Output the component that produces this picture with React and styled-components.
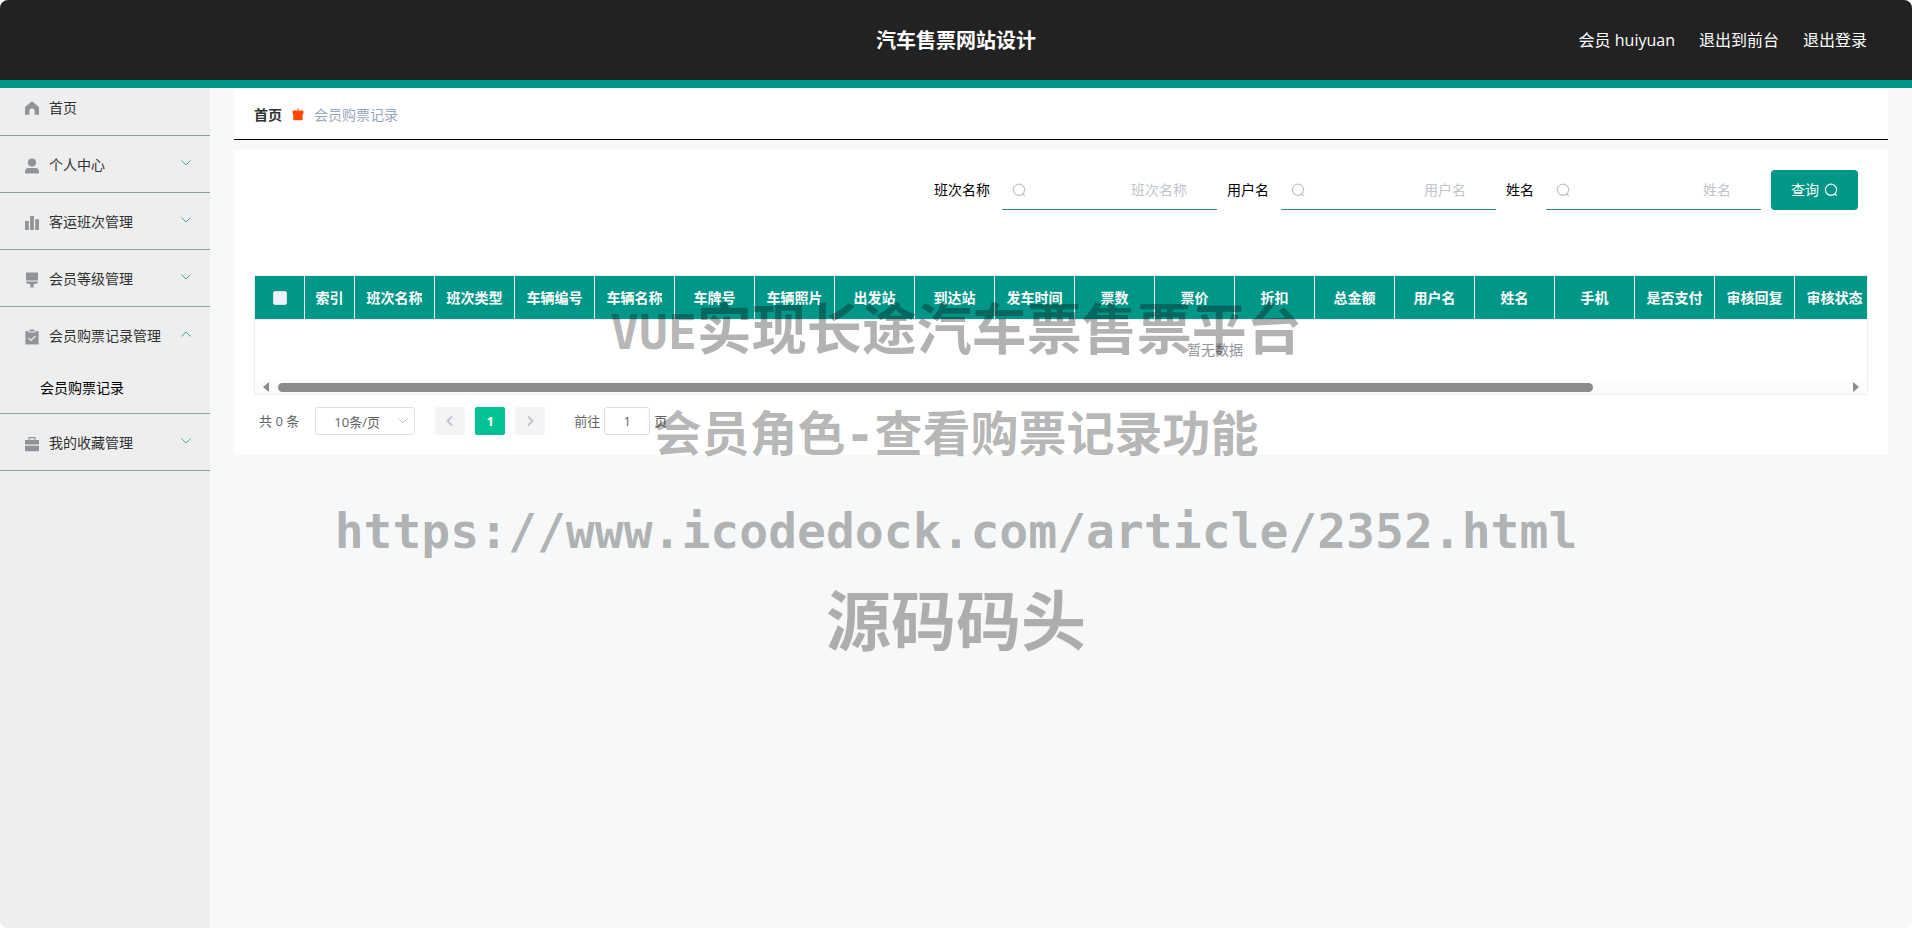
import React from "react";
import styled, { createGlobalStyle } from "styled-components";

const GlobalStyle = createGlobalStyle`
  * {
    box-sizing: border-box;
  }

  body {
    margin: 0;
    background: #fff;
    font-family: "Open Sans", "Noto Sans CJK SC", sans-serif;
    font-size: 14px;
    line-height: 20px;
    color: #303133;
  }

  button, input, select {
    font: inherit;
    color: inherit;
    margin: 0;
    padding: 0;
    border: 0;
    background: none;
    outline: none;
  }

  a {
    color: inherit;
    text-decoration: none;
  }
`;

const menu = [
  { label: "首页", icon: "home" },
  { label: "个人中心", icon: "user", sub: [] },
  { label: "客运班次管理", icon: "data", sub: [] },
  { label: "会员等级管理", icon: "brush", sub: [] },
  {
    label: "会员购票记录管理",
    icon: "claim",
    open: true,
    sub: ["会员购票记录"],
  },
  { label: "我的收藏管理", icon: "suitcase", sub: [] },
];

const filters = ["班次名称", "用户名", "姓名"];

const columns = [
  "班次名称",
  "班次类型",
  "车辆编号",
  "车辆名称",
  "车牌号",
  "车辆照片",
  "出发站",
  "到达站",
  "发车时间",
  "票数",
  "票价",
  "折扣",
  "总金额",
  "用户名",
  "姓名",
  "手机",
  "是否支付",
  "审核回复",
  "审核状态",
];

const shapes = {
  home: (
    <path d="M8 1.200 15 7v7.800h-4.400V11a2.600 2.600 0 0 0-5.200 0v3.800H1V7z" />
  ),
  user: (
    <>
      <circle cx="8" cy="4.600" r="4.100" />
      <path d="M4.500 10h7A3.500 3.500 0 0 1 15 13.500v.9a1 1 0 0 1-1 1H2a1 1 0 0 1-1-1v-.9A3.500 3.500 0 0 1 4.500 10z" />
    </>
  ),
  data: <path d="M1 6h3.800v9H1zM6.100 1h3.800v14H6.100zM11.200 4.200H15V15h-3.800z" />,
  brush: (
    <path d="M2.500.5h11a.5.5 0 0 1 .5.5v7.500H2V1a.5.5 0 0 1 .5-.5zM2 9.500h12v1l-2 1.500H9.700v3.500H6.300V12H4l-2-1.500z" />
  ),
  claim: (
    <>
      <path d="M2 2h2.500v1.500h7V2H14a.6.6 0 0 1 .6.6v12.300a.6.6 0 0 1-.6.6H2a.6.6 0 0 1-.6-.6V2.600A.6.6 0 0 1 2 2z" />
      <path d="M5.500.5h5v2h-5z" />
      <path d="m4.500 9 2.500 2.500 4.500-4.500" fill="none" stroke="#eee" strokeWidth="1.200" />
    </>
  ),
  suitcase: (
    <path d="M4.500 1h7v3H15v4.500H1V4h3.500zm1.200 1.200V4h4.600V2.200zM1 9.700h14v5a.5.5 0 0 1-.5.5h-13a.5.5 0 0 1-.5-.5z" />
  ),
};

const MenuIcon = ({ name }) => (
  <svg width="16" height="16" viewBox="0 0 16 16" fill="#909399" fillRule="evenodd">
    {shapes[name]}
  </svg>
);

const Chevron = ({ d, color, width = 1 }) => (
  <svg width="12" height="12" viewBox="0 0 12 12" fill="none" stroke={color} strokeWidth={width}>
    <path d={d} />
  </svg>
);

const down = "M1.500 3.500 6 8l4.500-4.500";
const up = "M1.500 8.500 6 4l4.500 4.500";
const left = "M8 1.500 3.500 6 8 10.500";
const right = "M4 1.500 8.500 6 4 10.500";

const SearchIcon = ({ color = "#c0c4cc" }) => (
  <svg width="14" height="14" viewBox="0 0 14 14" fill="none" stroke={color} strokeWidth="1.200">
    <circle cx="7" cy="6.800" r="5.600" />
    <path d="m10.800 10.800 2 2" />
  </svg>
);

const Basket = () => (
  <svg width="12" height="14" viewBox="0 0 12 14" fill="#ff4500">
    <path d="M1.200 2.500h2.600l1.500.5V.5h1.200V3l1.500-.5h2.800l.6.6v3.200h-.8v5.200a.8.8 0 0 1-.8.8H2.100a.8.8 0 0 1-.8-.8V6.300H.6V3.100z" />
  </svg>
);

const App = () => (
  <>
    <GlobalStyle />
    <Page>
      <Header>
        <Title>汽车售票网站设计</Title>
        <UserNav>
          <span>会员 huiyuan</span>
          <a href="#front">退出到前台</a>
          <a href="#logout">退出登录</a>
        </UserNav>
      </Header>
      <Body>
        <Sidebar>
          {menu.map((item) => (
            <MenuGroup key={item.label}>
              <MenuRow $first={!item.sub} type="button">
                <MenuIcon name={item.icon} />
                <MenuLabel>{item.label}</MenuLabel>
                {item.sub && (
                  <Arrow>
                    <Chevron d={item.open ? up : down} color="#3fa79b" />
                  </Arrow>
                )}
              </MenuRow>
              {item.open &&
                item.sub.map((s) => (
                  <SubItem key={s} href="#records">
                    {s}
                  </SubItem>
                ))}
            </MenuGroup>
          ))}
        </Sidebar>
        <Main>
          <Breadcrumb>
            <b>首页</b>
            <Basket />
            <Current>会员购票记录</Current>
          </Breadcrumb>
          <Card>
            <SearchForm onSubmit={(e) => e.preventDefault()}>
              {filters.map((f, i) => (
                <Field key={f}>
                  <label htmlFor={`filter-${i}`}>{f}</label>
                  <InputBox>
                    <SearchIcon />
                    <Input id={`filter-${i}`} placeholder={f} />
                  </InputBox>
                </Field>
              ))}
              <QueryButton type="submit">
                查询
                <SearchIcon color="#fff" />
              </QueryButton>
            </SearchForm>
            <TableBox>
              <TableView>
                <Table>
                  <colgroup>
                    <Col $w={50} />
                    <Col $w={50} />
                    {columns.map((c) => (
                      <Col key={c} $w={80} />
                    ))}
                    <Col $w={300} />
                  </colgroup>
                  <thead>
                    <tr>
                      <Th>
                        <Checkbox type="checkbox" aria-label="全选" />
                      </Th>
                      <Th>索引</Th>
                      {columns.map((c) => (
                        <Th key={c}>{c}</Th>
                      ))}
                      <Th />
                    </tr>
                  </thead>
                  <tbody>
                    <tr>
                      <Empty colSpan={columns.length + 3}>暂无数据</Empty>
                    </tr>
                  </tbody>
                </Table>
              </TableView>
              <ScrollBar>
                <svg width="6" height="10" viewBox="0 0 6 10" fill="#8b8b8b">
                  <path d="M6 0v10L0 5z" />
                </svg>
                <Track>
                  <Thumb />
                </Track>
                <svg width="6" height="10" viewBox="0 0 6 10" fill="#8b8b8b">
                  <path d="M0 0v10l6-5z" />
                </svg>
              </ScrollBar>
            </TableBox>
            <Pagination>
              <span>共 0 条</span>
              <SelectBox>
                <Select aria-label="每页条数" defaultValue="10">
                  <option value="10">10条/页</option>
                </Select>
                <SelectArrow>
                  <Chevron d={down} color="#c0c4cc" />
                </SelectArrow>
              </SelectBox>
              <Pager>
                <PageButton type="button" aria-label="上一页">
                  <Chevron d={left} color="#c0c4cc" width={2} />
                </PageButton>
                <PageButton type="button" $active>
                  1
                </PageButton>
                <PageButton type="button" aria-label="下一页">
                  <Chevron d={right} color="#c0c4cc" width={2} />
                </PageButton>
              </Pager>
              <Jump>
                <label htmlFor="jump">前往</label>
                <JumpInput id="jump" defaultValue="1" />
                <span>页</span>
              </Jump>
            </Pagination>
          </Card>
        </Main>
      </Body>
      <Watermark>
        <Mark $size={55} $line={100}>
          <Latin>VUE</Latin>实现长途汽车票售票平台
        </Mark>
        <Mark $size={48} $line={104}>
          会员角色-查看购票记录功能
        </Mark>
        <Mark $size={48} $line={90}>
          https://www.icodedock.com/article/2352.html
        </Mark>
        <Mark $size={65} $line={94}>
          源码码头
        </Mark>
      </Watermark>
    </Page>
  </>
);

const Page = styled.div`
  position: relative;
  display: flex;
  flex-direction: column;
  min-height: 100vh;
  overflow: hidden;
  border-radius: 8px;
  background: #f6f8fa;
`;

const Header = styled.header`
  display: grid;
  grid-template-columns: 1fr auto 1fr;
  align-items: center;
  height: 88px;
  padding: 0 45px;
  background: #222;
  border-bottom: 8px solid #009688;
  color: #fff;
`;

const Title = styled.h1`
  grid-column: 2;
  margin: 0;
  padding-top: 2px;
  font-size: 20px;
  line-height: 28px;
`;

const UserNav = styled.nav`
  display: flex;
  justify-content: flex-end;
  gap: 24px;
  font-size: 16px;
`;

const Body = styled.div`
  display: flex;
  flex: 1;
`;

const Sidebar = styled.nav`
  flex: none;
  width: 210px;
  background: #eee;
`;

const MenuGroup = styled.div`
  border-bottom: 1px solid #85a69c;
`;

const MenuRow = styled.button`
  display: flex;
  align-items: center;
  gap: 9px;
  width: 100%;
  height: ${(p) => (p.$first ? 47 : 56)}px;
  padding: ${(p) => (p.$first ? "0 18px 8px 24px" : "2px 18px 0 24px")};
  cursor: pointer;

  svg {
    margin-top: 1px;
  }
`;

const MenuLabel = styled.span`
  flex: 1;
  text-align: left;
`;

const Arrow = styled.span`
  display: flex;
  padding-bottom: 6px;
`;

const SubItem = styled.a`
  display: block;
  padding-left: 40px;
  line-height: 50px;
  color: #000;
`;

const Main = styled.main`
  flex: 1;
  min-width: 0;
  padding: 2px 24px;
`;

const Breadcrumb = styled.div`
  display: flex;
  align-items: center;
  gap: 10px;
  height: 50px;
  padding: 0 20px;
  margin-bottom: 10px;
  background: #fff;
  border-bottom: 1px solid #000;
`;

const Current = styled.span`
  color: #97a8be;
`;

const Card = styled.section`
  padding: 20px;
  background: #fff;
`;

const SearchForm = styled.form`
  display: flex;
  justify-content: flex-end;
  gap: 10px;
  padding: 0 10px;
  margin-bottom: 65px;
  color: #000;
`;

const Field = styled.div`
  display: flex;
  align-items: center;
  gap: 12px;
`;

const InputBox = styled.div`
  display: flex;
  align-items: center;
  width: 215px;
  height: 40px;
  padding: 0 30px 0 10px;
  border-bottom: 1px solid #2a8a86;
`;

const Input = styled.input`
  flex: 1;
  min-width: 0;
  height: 38px;
  text-align: right;

  &::placeholder {
    color: #c0c4cc;
    opacity: 1;
  }
`;

const QueryButton = styled.button`
  display: flex;
  align-items: center;
  justify-content: center;
  gap: 5px;
  width: 87px;
  height: 40px;
  border-radius: 4px;
  background: #009688;
  color: #fff;
  cursor: pointer;
`;

const TableBox = styled.div`
  border: 1px solid #ebeef5;
`;

const TableView = styled.div`
  overflow: hidden;
`;

const Table = styled.table`
  width: 1920px;
  table-layout: fixed;
  border-collapse: separate;
  border-spacing: 0;
`;

const Col = styled.col`
  width: ${(p) => p.$w}px;
`;

const Th = styled.th`
  height: 44px;
  padding: 0;
  background: #009688;
  border-right: 1px solid #ebeef5;
  border-bottom: 1px solid #ebeef5;
  color: #fff;
  text-align: center;
  white-space: nowrap;
`;

const Checkbox = styled.input`
  appearance: none;
  display: block;
  width: 14px;
  height: 14px;
  margin: 0 auto;
  border: 1px solid #dcdfe6;
  border-radius: 2px;
  background: #edf2fc;
`;

const Empty = styled.td`
  height: 60px;
  padding: 0;
  color: #909399;
  text-align: center;
`;

const ScrollBar = styled.div`
  display: flex;
  align-items: center;
  gap: 9px;
  height: 14px;
  padding: 0 8px;
  background: #fcfcfc;
`;

const Track = styled.div`
  flex: 1;
`;

const Thumb = styled.div`
  width: 84%;
  height: 9px;
  border-radius: 5px;
  background: #8b8b8b;
`;

const Pagination = styled.div`
  display: flex;
  align-items: center;
  padding: 12px 5px 0;
  font-size: 13px;
  line-height: 28px;
  color: #606266;
`;

const SelectBox = styled.div`
  position: relative;
  width: 100px;
  margin: 0 20px 0 16px;
`;

const Select = styled.select`
  appearance: none;
  display: block;
  width: 100%;
  height: 28px;
  padding: 0 24px 0 8px;
  border: 1px solid #dcdfe6;
  border-radius: 3px;
  text-align: center;
  text-align-last: center;
`;

const SelectArrow = styled.span`
  position: absolute;
  top: 8px;
  right: 6px;
  display: flex;
  pointer-events: none;
`;

const Pager = styled.div`
  display: flex;
  gap: 10px;
`;

const PageButton = styled.button`
  display: flex;
  align-items: center;
  justify-content: center;
  width: 30px;
  height: 28px;
  border-radius: 2px;
  background: ${(p) => (p.$active ? "#00c292" : "#f4f4f5")};
  color: #fff;
  font-weight: 700;
`;

const Jump = styled.div`
  display: flex;
  align-items: center;
  gap: 4px;
  margin-left: 29px;
`;

const JumpInput = styled.input`
  width: 46px;
  height: 28px;
  border: 1px solid #dcdfe6;
  border-radius: 3px;
  text-align: center;
`;

const Watermark = styled.div`
  position: absolute;
  top: 280px;
  left: 0;
  right: 0;
  pointer-events: none;
  color: rgba(0, 0, 0, 0.3);
  font-family: "DejaVu Sans Mono", "Noto Sans CJK SC", monospace;
  font-weight: 700;
  text-align: center;
  white-space: nowrap;
`;

const Mark = styled.div`
  font-size: ${(p) => p.$size}px;
  line-height: ${(p) => p.$line}px;
`;

const Latin = styled.span`
  font-size: 48px;
`;

export default App;
